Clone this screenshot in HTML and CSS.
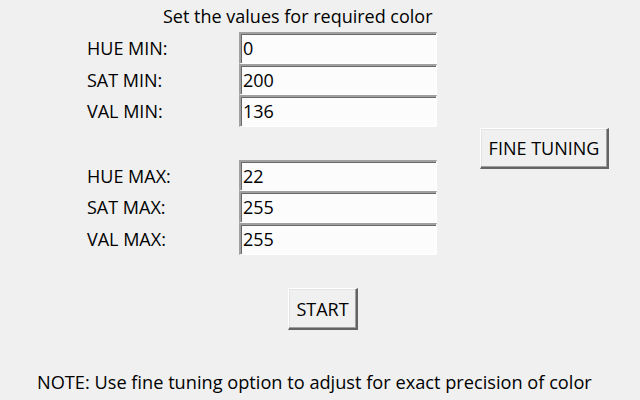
FILE: index.html
```html
<!DOCTYPE html>
<html>
<head>
<meta charset="utf-8">
<link rel="stylesheet" href="styles.css">
</head>
<body>
<div class="window">
  <div class="form">
    <div class="title">Set the values for required color</div>
    <div class="label r1">HUE MIN:</div><div class="entry r1">0</div>
    <div class="label r2">SAT MIN:</div><div class="entry r2">200</div>
    <div class="label r3">VAL MIN:</div><div class="entry r3">136</div>
    <div class="fine"><button class="btn btn-fine">FINE TUNING</button></div>
    <div class="label r5">HUE MAX:</div><div class="entry r5">22</div>
    <div class="label r6">SAT MAX:</div><div class="entry r6">255</div>
    <div class="label r7">VAL MAX:</div><div class="entry r7">255</div>
  </div>
  <div class="start-row"><button class="btn btn-start">START</button></div>
  <div class="note">NOTE: Use fine tuning option to adjust for exact precision of color</div>
</div>
</body>
</html>
```
FILE: styles.css
```css
html, body {
  margin: 0;
  padding: 0;
  background: #f0f0f0;
}
.window {
  width: 640px;
  height: 400px;
  background: #f0f0f0;
  font-family: "Open Sans", "Liberation Sans", sans-serif;
  font-size: 18px;
  color: #000;
  display: flex;
  flex-direction: column;
}
.form {
  display: grid;
  grid-template-columns: 152px 198px 43px 129px;
  grid-template-rows: 32px 32px 31px 32px 33px 31px 32px 32px;
  padding-left: 87px;
}
.title {
  grid-column: 1 / 4;
  grid-row: 1;
  padding-left: 76px;
  line-height: 32px;
}
.label {
  grid-column: 1;
  line-height: 33px;
}
.entry {
  grid-column: 2;
  box-sizing: border-box;
  background: #fcfcfc;
  border-top: 2px solid #a0a0a0;
  border-left: 2px solid #a0a0a0;
  border-right: 1px solid #ffffff;
  border-bottom: 1px solid #ffffff;
  box-shadow: inset 1px 1px 0 #696969;
  padding-left: 2px;
  line-height: 29px;
}
.r1 { grid-row: 2; }
.r2 { grid-row: 3; }
.r3 { grid-row: 4; }
.r5 { grid-row: 6; }
.r6 { grid-row: 7; }
.r7 { grid-row: 8; }
.fine {
  grid-column: 4;
  grid-row: 5 / 7;
  padding-top: 1px;
}
.btn {
  font-family: inherit;
  font-size: 18px;
  color: #000;
  background: #f0f0f0;
  box-sizing: border-box;
  border-top: 1px solid #ffffff;
  border-left: 1px solid #ffffff;
  border-right: 2px solid #646464;
  border-bottom: 2px solid #646464;
  box-shadow: inset -1px -1px 0 #a0a0a0, inset 1px 1px 0 #e3e3e3;
  padding: 0;
  margin: 0;
  display: flex;
  align-items: center;
  justify-content: center;
}
.btn-fine {
  width: 129px;
  height: 41px;
}
.start-row {
  display: flex;
  padding-top: 33px;
  padding-left: 288px;
}
.btn-start {
  width: 70px;
  height: 42px;
}
.note {
  padding-left: 37px;
  margin-top: 41px;
  font-size: 18.2px;
  line-height: 22px;
}
```
